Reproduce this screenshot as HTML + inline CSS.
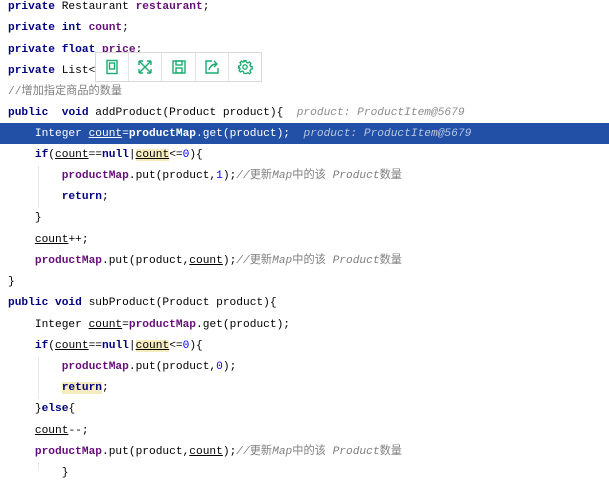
<!DOCTYPE html>
<html><head><meta charset="utf-8"><style>
body{margin:0;width:609px;height:470px;background:#fff;overflow:hidden;position:relative;font-family:"Liberation Mono","Noto Sans CJK SC",monospace;font-size:11.2px;color:#000}
.l{position:absolute;left:8px;height:21.2px;line-height:21.2px;white-space:pre}
.k{color:#000080;font-weight:bold}
.f{color:#660E7A;font-weight:bold}
.c{color:#808080;font-style:italic}
.cz{color:#808080}
.n{color:#0000FF}
.u{text-decoration:underline}
.hl{background:#F6EBBC}
.h{color:#8c8c8c;font-style:italic}
#sel{position:absolute;left:0;top:123px;width:609px;height:21px;background:#2150A6}
#tb{position:absolute;left:95px;top:52px;width:165px;height:28px;background:#fff;border:1px solid #d8d8d8;display:flex}
#tb div{flex:1;border-right:1px solid #e3e3e3;display:flex;align-items:center;justify-content:center}
#tb div:last-child{border-right:none}
.g{position:absolute;width:1px;background:#e8e8e8}
</style></head><body>
<div id="sel"></div>
<div class="g" style="left:38px;top:166px;height:42px"></div>
<div class="g" style="left:38px;top:357px;height:42px"></div>
<div class="g" style="left:38px;top:462px;height:8px"></div>
<div class="l" style="top:-3px"><span class="k">private</span> Restaurant <span class="f">restaurant</span>;</div>
<div class="l" style="top:18px"><span class="k">private int</span> <span class="f">count</span>;</div>
<div class="l" style="top:40px"><span class="k">private float</span> <span class="f">price</span>;</div>
<div class="l" style="top:61px"><span class="k">private</span> List&lt;</div>
<div class="l" style="top:82px"><span class="cz">//增加指定商品的数量</span></div>
<div class="l" style="top:103px"><span class="k">public</span>  <span class="k">void</span> addProduct(Product product){  <span class="h">product: ProductItem@5679</span></div>
<div class="l" style="top:124px;color:#fff">    Integer <span class="u">count</span>=<b>productMap</b>.get(product);  <span style="color:#b9c6e0;font-style:italic">product: ProductItem@5679</span></div>
<div class="l" style="top:145px">    <span class="k">if</span>(<span class="u">count</span>==<span class="k">null</span>|<span class="u hl">count</span>&lt;=<span class="n">0</span>){</div>
<div class="l" style="top:166px">        <span class="f">productMap</span>.put(product,<span class="n">1</span>);<span class="c">//</span><span class="cz">更新</span><span class="c">Map</span><span class="cz">中的该</span> <span class="c">Product</span><span class="cz">数量</span></div>
<div class="l" style="top:187px">        <span class="k">return</span>;</div>
<div class="l" style="top:208px">    }</div>
<div class="l" style="top:230px">    <span class="u">count</span>++;</div>
<div class="l" style="top:251px">    <span class="f">productMap</span>.put(product,<span class="u">count</span>);<span class="c">//</span><span class="cz">更新</span><span class="c">Map</span><span class="cz">中的该</span> <span class="c">Product</span><span class="cz">数量</span></div>
<div class="l" style="top:272px">}</div>
<div class="l" style="top:293px"><span class="k">public void</span> subProduct(Product product){</div>
<div class="l" style="top:315px">    Integer <span class="u">count</span>=<span class="f">productMap</span>.get(product);</div>
<div class="l" style="top:336px">    <span class="k">if</span>(<span class="u">count</span>==<span class="k">null</span>|<span class="u hl">count</span>&lt;=<span class="n">0</span>){</div>
<div class="l" style="top:357px">        <span class="f">productMap</span>.put(product,<span class="n">0</span>);</div>
<div class="l" style="top:378px">        <span class="k hl">return</span>;</div>
<div class="l" style="top:399px">    }<span class="k">else</span>{</div>
<div class="l" style="top:421px">    <span class="u">count</span>--;</div>
<div class="l" style="top:442px">    <span class="f">productMap</span>.put(product,<span class="u">count</span>);<span class="c">//</span><span class="cz">更新</span><span class="c">Map</span><span class="cz">中的该</span> <span class="c">Product</span><span class="cz">数量</span></div>
<div class="l" style="top:463px">        }</div>
<div id="tb">
<div><svg width="16" height="16" viewBox="0 0 16 16" fill="none" stroke="#1aad6f" stroke-width="1.4"><rect x="3" y="1.5" width="10" height="13"/><rect x="5.5" y="4" width="5" height="6"/></svg></div>
<div><svg width="16" height="16" viewBox="0 0 16 16" fill="none" stroke="#1aad6f" stroke-width="1.4"><path d="M2 2L14 14M14 2L2 14M2 2h4M2 2v4M14 2h-4M14 2v4M2 14h4M2 14v-4M14 14h-4M14 14v-4"/></svg></div>
<div><svg width="16" height="16" viewBox="0 0 16 16" fill="none" stroke="#1aad6f" stroke-width="1.4"><rect x="2" y="2" width="12" height="12"/><rect x="5" y="2" width="6" height="4"/><rect x="5" y="9" width="6" height="5"/></svg></div>
<div><svg width="16" height="16" viewBox="0 0 16 16" fill="none" stroke="#1aad6f" stroke-width="1.4"><path d="M8 2H2v12h12V9M5 11c1-4 4-6 8-6M10 2l3 3-3 3"/></svg></div>
<div><svg width="16" height="16" viewBox="0 0 16 16" fill="none" stroke="#1aad6f" stroke-width="1.3"><circle cx="8" cy="8" r="2.2"/><path d="M7 1.5h2l.4 1.8 1.5.7 1.6-1 1.4 1.4-1 1.6.7 1.5 1.8.4v2l-1.8.4-.7 1.5 1 1.6-1.4 1.4-1.6-1-1.5.7L9 14.5H7l-.4-1.8-1.5-.7-1.6 1-1.4-1.4 1-1.6-.7-1.5L1.5 9V7l1.8-.4.7-1.5-1-1.6 1.4-1.4 1.6 1 1.5-.7z"/></svg></div>
</div>
</body></html>
